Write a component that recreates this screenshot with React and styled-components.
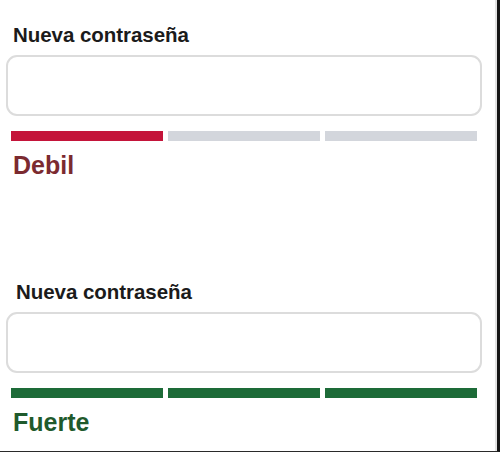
import React from 'react'
import styled, { createGlobalStyle } from 'styled-components'

const GlobalStyle = createGlobalStyle`
  html, body {
    margin: 0;
    padding: 0;
    background: #ffffff;
  }
  body {
    font-family: "Liberation Sans", Arial, sans-serif;
  }
`;

const Frame = styled.div`
  box-sizing: border-box;
  width: 500px;
  height: 452px;
  background: #ffffff;
  border-right: 3px solid #151515;
  border-bottom: 1px solid #2a2a2a;
  box-shadow: inset -2px 0 0 #e2e2e2;
  padding-top: 25px;
  display: flex;
  flex-direction: column;
  overflow: hidden;
`;

const Field = styled.div`
  display: flex;
  flex-direction: column;
  margin-top: ${props => props.offset || 0}px;
`;

const Label = styled.label`
  font-size: 20.5px;
  line-height: 20px;
  font-weight: 700;
  color: #1b1b1b;
  letter-spacing: -0.05px;
  margin-left: ${props => props.indent}px;
`;

const Input = styled.input`
  box-sizing: border-box;
  margin: 10px 0 0 6px;
  width: 476px;
  height: 61px;
  border: 2px solid #dcdcdc;
  border-radius: 11px;
  background: #ffffff;
  outline: none;
`;

const Meter = styled.div`
  display: grid;
  grid-template-columns: repeat(3, 1fr);
  gap: 5px;
  width: 466px;
  margin: 15px 0 0 11px;
`;

const Segment = styled.div`
  height: 10px;
  background: ${props => props.color};
`;

const Strength = styled.div`
  margin: 12px 0 0 13px;
  font-size: 25px;
  line-height: 25px;
  font-weight: 700;
  color: ${props => props.color};
`;

const levels = {
  weak: { label: 'Debil', text: '#7b2a30', bar: '#c4143a', filled: 1 },
  strong: { label: 'Fuerte', text: '#1f5a2c', bar: '#1d6b38', filled: 3 },
};

function PasswordField({ level, indent, offset }) {
  const l = levels[level];
  return (
    <Field offset={offset}>
      <Label indent={indent}>Nueva contraseña</Label>
      <Input type="password" />
      <Meter>
        {[0, 1, 2].map(i => (
          <Segment key={i} color={i < l.filled ? l.bar : '#d3d6dc'} />
        ))}
      </Meter>
      <Strength color={l.text}>{l.label}</Strength>
    </Field>
  );
}

export default function App() {
  return (
    <React.Fragment>
      <GlobalStyle />
      <Frame>
        <PasswordField level="weak" indent={13} />
        <PasswordField level="strong" indent={16} offset={104} />
      </Frame>
    </React.Fragment>
  );
}
